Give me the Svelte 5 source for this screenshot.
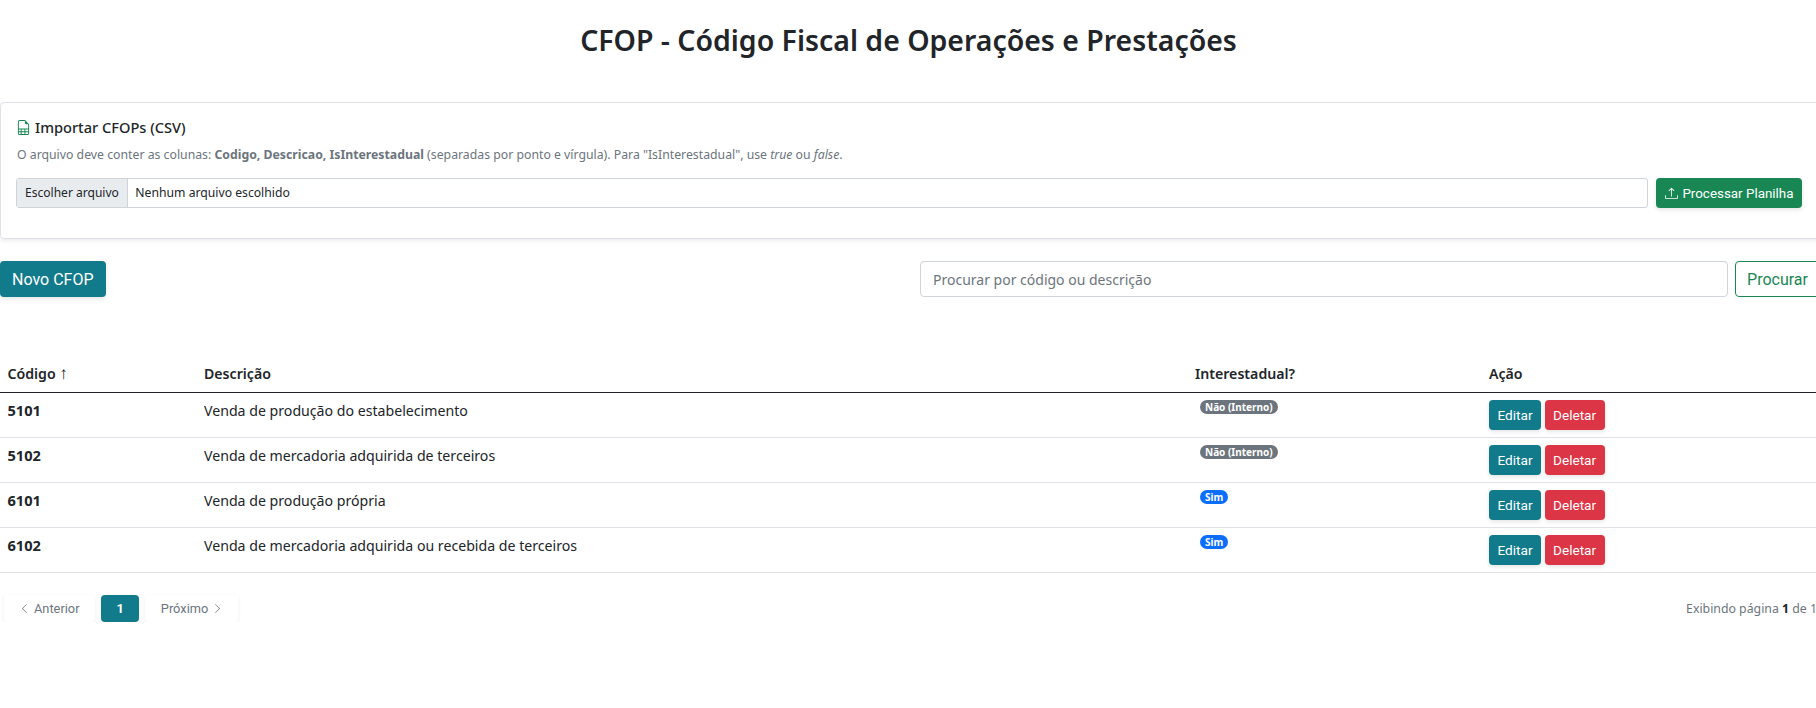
<script>
  const rows = [
    { code: '5101', desc: 'Venda de produção do estabelecimento', inter: false },
    { code: '5102', desc: 'Venda de mercadoria adquirida de terceiros', inter: false },
    { code: '6101', desc: 'Venda de produção própria', inter: true },
    { code: '6102', desc: 'Venda de mercadoria adquirida ou recebida de terceiros', inter: true }
  ];
</script>

<div class="page">
  <h1>CFOP - Código Fiscal de Operações e Prestações</h1>

  <section class="card">
    <h2>
      <svg class="sheet" viewBox="0 0 16 16" fill="currentColor">
        <path d="M14 14V4.5L9.5 0H4a2 2 0 0 0-2 2v12a2 2 0 0 0 2 2h8a2 2 0 0 0 2-2M9.5 3A1.5 1.5 0 0 0 11 4.5h2V9H3V2a1 1 0 0 1 1-1h5.5zM3 12v-2h2v2zm0 1h2v2H4a1 1 0 0 1-1-1zm3 2v-2h3v2zm4 0v-2h3v1a1 1 0 0 1-1 1zm3-3h-3v-2h3zm-7 0v-2h3v2z" />
      </svg>
      Importar CFOPs (CSV)
    </h2>
    <p class="hint">
      O arquivo deve conter as colunas: <strong>Codigo, Descricao, IsInterestadual</strong> (separadas por ponto e vírgula). Para "IsInterestadual", use <em>true</em> ou <em>false</em>.
    </p>
    <div class="upload">
      <div class="file">
        <span class="file-btn">Escolher arquivo</span>
        <span class="file-name">Nenhum arquivo escolhido</span>
      </div>
      <button class="btn green">
        <svg viewBox="0 0 16 16" fill="currentColor">
          <path d="M.5 9.9a.5.5 0 0 1 .5.5v2.5a1 1 0 0 0 1 1h12a1 1 0 0 0 1-1v-2.5a.5.5 0 0 1 1 0v2.5a2 2 0 0 1-2 2H2a2 2 0 0 1-2-2v-2.5a.5.5 0 0 1 .5-.5" />
          <path d="M7.646 1.146a.5.5 0 0 1 .708 0l3 3a.5.5 0 0 1-.708.708L8.5 2.707V11.5a.5.5 0 0 1-1 0V2.707L5.354 4.854a.5.5 0 1 1-.708-.708z" />
        </svg>
        Processar Planilha
      </button>
    </div>
  </section>

  <div class="toolbar">
    <button class="btn teal big">Novo CFOP</button>
    <div class="search">
      <input placeholder="Procurar por código ou descrição" />
      <button class="btn outline big">Procurar</button>
    </div>
  </div>

  <table>
    <colgroup>
      <col style="width: 196px" />
      <col style="width: 991px" />
      <col style="width: 294px" />
      <col />
    </colgroup>
    <thead>
      <tr>
        <th class="first">Código <span class="arrow">↑</span></th>
        <th>Descrição</th>
        <th>Interestadual?</th>
        <th>Ação</th>
      </tr>
    </thead>
    <tbody>
      {#each rows as row}
        <tr>
          <td class="first code">{row.code}</td>
          <td>{row.desc}</td>
          <td>
            <span class="badge" class:blue={row.inter}>{row.inter ? 'Sim' : 'Não (Interno)'}</span>
          </td>
          <td>
            <div class="actions">
              <button class="btn teal small">Editar</button>
              <button class="btn red small">Deletar</button>
            </div>
          </td>
        </tr>
      {/each}
    </tbody>
  </table>

  <div class="footer">
    <nav class="pager">
      <span class="pg prev">
        <svg viewBox="0 0 16 16" fill="currentColor"><path d="M11.354 1.646a.5.5 0 0 1 0 .708L5.707 8l5.647 5.646a.5.5 0 0 1-.708.708l-6-6a.5.5 0 0 1 0-.708l6-6a.5.5 0 0 1 .708 0" /></svg>
        Anterior
      </span>
      <span class="pg current">1</span>
      <span class="pg next">
        Próximo
        <svg viewBox="0 0 16 16" fill="currentColor"><path d="M4.646 1.646a.5.5 0 0 1 .708 0l6 6a.5.5 0 0 1 0 .708l-6 6a.5.5 0 0 1-.708-.708L10.293 8 4.646 2.354a.5.5 0 0 1 0-.708" /></svg>
      </span>
    </nav>
    <span class="info">Exibindo página <b>1</b> de 1</span>
  </div>
</div>

<style>
  :global(body) {
    overflow: hidden;
    background: #fff;
  }

  .page {
    width: 1820px;
    color: #212529;
    font-family: "Noto Sans", "Open Sans", sans-serif;
    font-size: 14.15px;
  }

  h1 {
    margin: 0;
    padding: 22px 3px 0 0;
    height: 102px;
    box-sizing: border-box;
    text-align: center;
    font-size: 28.45px;
    line-height: 36px;
    font-weight: 600;
  }

  .card {
    box-sizing: border-box;
    height: 137px;
    padding: 14px 17px 16px 16px;
    border: 1px solid #dee2e6;
    border-radius: 4px;
    box-shadow: 0 2px 4px rgba(0, 0, 0, 0.08);
  }

  h2 {
    display: flex;
    align-items: center;
    gap: 4px;
    margin: 0 0 9px;
    font-size: 14.6px;
    line-height: 20px;
    font-weight: 500;
  }

  .sheet {
    width: 15px;
    height: 15px;
    margin-left: -1px;
    color: #198754;
  }

  .hint {
    margin: 0 0 14px;
    font-size: 12.27px;
    line-height: 18px;
    color: #6c757d;
  }

  .upload {
    display: flex;
    gap: 8px;
  }

  .file {
    flex: 1;
    display: flex;
    height: 30px;
    box-sizing: border-box;
    margin-left: -1px;
    border: 1px solid #ced4da;
    border-radius: 3px;
    font-size: 12.2px;
    line-height: 28px;
  }

  .file-btn {
    padding: 0 8px;
    background: #e9ecef;
    border-right: 1px solid #ced4da;
    font-size: 12.05px;
  }

  .file-name {
    padding: 0 7.5px;
  }

  .btn {
    box-sizing: border-box;
    border: 1px solid transparent;
    border-radius: 4px;
    padding: 0 8px;
    font-family: Roboto, "Liberation Sans", sans-serif;
    color: #fff;
    box-shadow: 0 2px 4px rgba(0, 0, 0, 0.1);
  }

  .btn svg {
    width: 13px;
    height: 13px;
    vertical-align: -1px;
  }

  .green {
    display: flex;
    align-items: center;
    gap: 4px;
    height: 30px;
    padding: 0 7.5px 0 8px;
    font-size: 13.4px;
    background: #198754;
  }

  .teal {
    background: #117a8b;
  }

  .red {
    background: #dc3545;
  }

  .big {
    height: 36px;
    padding: 0 11px;
    font-size: 16px;
  }

  .outline {
    background: #fff;
    border-color: #198754;
    color: #198754;
    box-shadow: none;
  }

  .small {
    height: 30px;
    padding: 0 7.5px;
    font-size: 13.6px;
  }

  .toolbar {
    display: flex;
    justify-content: space-between;
    margin-top: 22px;
  }

  .search {
    display: flex;
    gap: 7px;
    width: 900px;
  }

  input {
    flex: 1;
    min-width: 0;
    box-sizing: border-box;
    height: 36px;
    padding: 0 12px;
    border: 1px solid #ced4da;
    border-radius: 4px;
    font-family: inherit;
    font-size: 14px;
  }

  input::placeholder {
    color: #6c757d;
  }

  table {
    width: 100%;
    margin-top: 62px;
    border-collapse: collapse;
    table-layout: fixed;
  }

  th {
    padding: 0 8px 4px;
    height: 33px;
    box-sizing: border-box;
    text-align: left;
    font-size: 14.15px;
    font-weight: 600;
    border-bottom: 1px solid #212529;
  }

  .arrow {
    font-size: 17px;
    font-weight: 400;
    line-height: 1;
  }

  td {
    height: 45px;
    box-sizing: border-box;
    padding: 8px 8px 0;
    vertical-align: top;
    border-bottom: 1px solid #dee2e6;
    line-height: 20px;
  }

  .first {
    padding-left: 7.5px;
  }

  .code {
    padding-top: 7.5px;
    font-size: 14.6px;
    font-weight: 700;
  }

  .actions {
    display: flex;
    gap: 3.5px;
    margin-top: -0.5px;
  }

  .badge {
    display: inline-block;
    margin: -0.5px 0 0 5px;
    padding: 0 5px;
    height: 14px;
    vertical-align: top;
    border-radius: 7px;
    background: #6c757d;
    color: #fff;
    font-size: 10px;
    font-weight: 700;
    line-height: 14px;
  }

  .blue {
    background: #0d6efd;
  }

  .footer {
    display: flex;
    justify-content: space-between;
    align-items: center;
    margin-top: 22px;
    padding: 0 3px 0 4px;
  }

  .pager {
    display: flex;
    gap: 6px;
  }

  .pg {
    display: flex;
    align-items: center;
    gap: 4px;
    height: 27px;
    padding: 0 15.5px;
    border-radius: 4px;
    font-family: Roboto, "Liberation Sans", sans-serif;
    font-size: 12.8px;
    color: #6c757d;
    box-shadow: 0 1px 4px rgba(0, 0, 0, 0.07);
  }

  .prev {
    padding: 0 16px 0 15px;
  }

  .next {
    padding: 0 15px 0 16px;
  }

  .pg svg {
    width: 11px;
    height: 11px;
  }

  .current {
    padding: 0 15px;
    background: #117a8b;
    color: #fff;
    font-weight: 700;
  }

  .info {
    font-size: 12.3px;
    color: #6c757d;
  }

  .info b {
    color: #212529;
  }
</style>
